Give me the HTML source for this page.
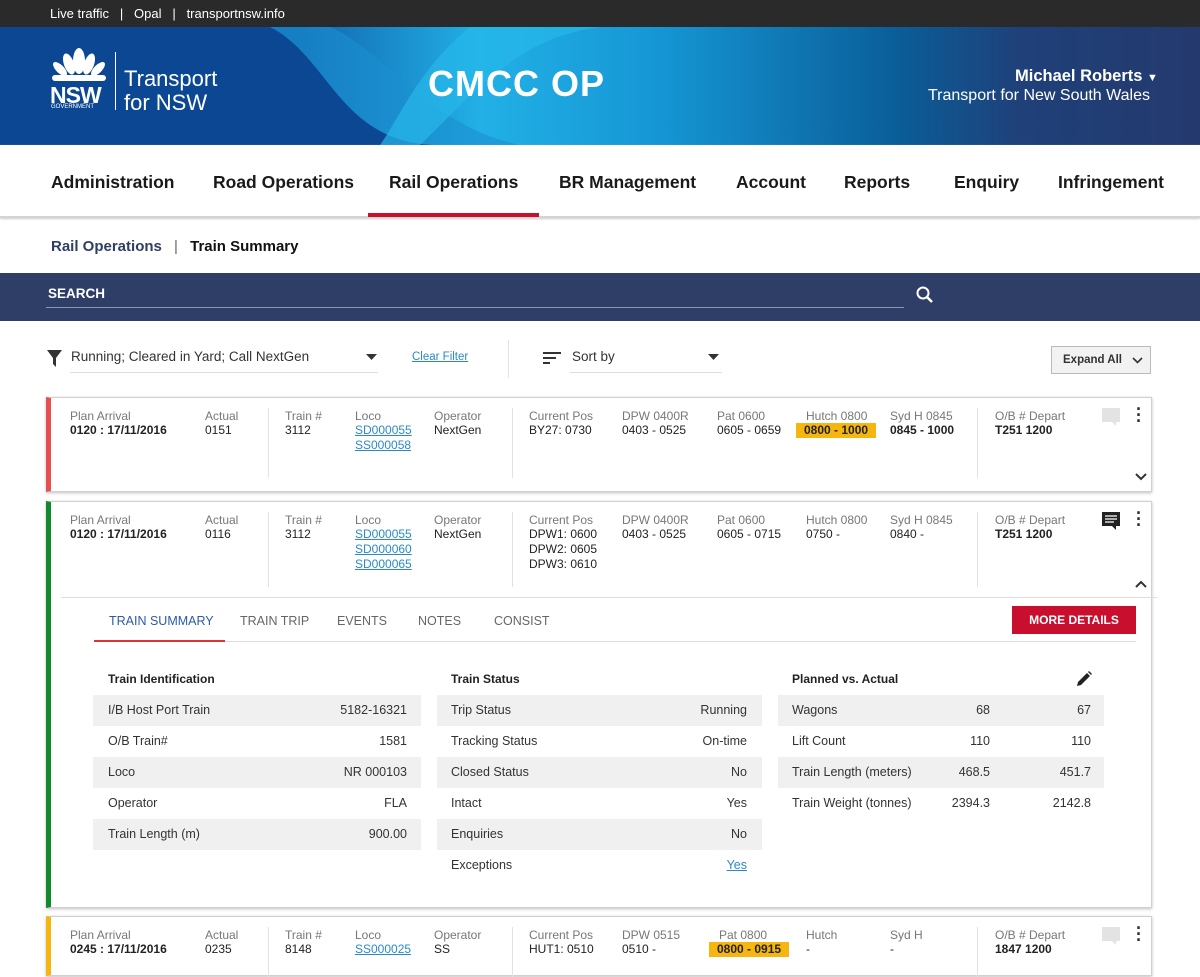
<!DOCTYPE html>
<html><head><meta charset="utf-8">
<style>
*{box-sizing:border-box;margin:0;padding:0}
body{width:1200px;height:960px;overflow:hidden;background:#fff;font-family:"Liberation Sans",sans-serif;color:#222;position:relative}
.a{position:absolute;white-space:nowrap}
.top{left:0;top:0;width:1200px;height:27px;background:#2a2a2a;color:#fff;font-size:13px;line-height:27px;padding-left:50px}
.hdr{left:0;top:27px;width:1200px;height:118px;overflow:hidden;background:linear-gradient(90deg,#0c4a95 0%,#1166b0 25%,#22b0e6 40%,#1596d4 55%,#0a5d98 75%,#1f4079 85%,#243a6e 100%)}
.nav{top:145px;left:0;width:1200px;height:73px;border-bottom:2px solid #d4d4d4;box-shadow:0 1px 2px #ccc}
.nav span{position:absolute;top:27px;font-size:17.5px;font-weight:bold;color:#1a1a1a}
.srch{left:0;top:273px;width:1200px;height:48px;background:#2e3e66}
.lbl{color:#777;font-size:12px}
.val{color:#222;font-size:12px;line-height:15px}
.b{font-weight:bold}
.lnk{color:#2a8ac8;text-decoration:underline}
.card{position:absolute;left:46px;width:1106px;background:#fff;border:1px solid #d0d0d0;box-shadow:0 1px 3px rgba(0,0,0,.25)}
.vd{position:absolute;width:1px;background:#e2e2e2}
.row{position:absolute;height:31px;font-size:12.5px;line-height:31px;color:#333}
.g{background:#f0f0f0}
</style></head><body>
<div class="a top">Live traffic &nbsp;&nbsp;|&nbsp;&nbsp; Opal &nbsp;&nbsp;|&nbsp;&nbsp; transportnsw.info</div>
<div class="a hdr">
<svg width="1200" height="118" style="position:absolute;left:0;top:0">
<path d="M0 0 L270 0 C330 30 340 118 440 118 L0 118 Z" fill="#0b4793"/>
<path d="M270 0 C330 30 340 118 440 118 L520 118 C430 100 380 20 330 0Z" fill="#1a8fd0" opacity=".6"/>
<path d="M420 118 C480 60 520 10 600 0 L470 0 C420 40 400 90 380 118Z" fill="#27b8ea" opacity=".7"/>
</svg>
<svg class="a" style="left:50px;top:20px" width="58" height="36" viewBox="0 0 58 36"><g fill="#fff"><ellipse cx="29" cy="14" rx="6" ry="13"/><ellipse cx="19" cy="17" rx="5" ry="11" transform="rotate(-20 19 17)"/><ellipse cx="39" cy="17" rx="5" ry="11" transform="rotate(20 39 17)"/><ellipse cx="10" cy="22" rx="4" ry="9" transform="rotate(-45 10 22)"/><ellipse cx="48" cy="22" rx="4" ry="9" transform="rotate(45 48 22)"/><rect x="2" y="28" width="54" height="6" rx="3"/></g></svg>
<div class="a" style="left:50px;top:55px;color:#fff;font-weight:bold;font-size:23px;letter-spacing:-1px">NSW</div>
<div class="a" style="left:51px;top:77px;color:#fff;font-size:6px">GOVERNMENT</div>
<div class="a" style="left:115px;top:25px;width:1px;height:58px;background:#fff"></div>
<div class="a" style="left:124px;top:40px;color:#fff;font-size:22px;line-height:24px">Transport<br>for NSW</div>
<div class="a" style="left:428px;top:36px;color:#fff;font-size:36px;font-weight:bold;letter-spacing:1px">CMCC OP</div>
<div class="a" style="left:1015px;top:40px;color:#fff;font-size:16.5px;font-weight:bold">Michael Roberts <span style="font-size:11px">▼</span></div>
<div class="a" style="left:928px;top:60px;color:#fff;font-size:16px">Transport for New South Wales</div>
</div>
<div class="a nav">
<span style="left:51px">Administration</span><span style="left:213px">Road Operations</span><span style="left:389px">Rail Operations</span><span style="left:559px">BR Management</span><span style="left:736px">Account</span><span style="left:844px">Reports</span><span style="left:954px">Enquiry</span><span style="left:1058px">Infringement</span>
<div class="a" style="left:368px;top:68px;width:171px;height:4px;background:#c8102e"></div>
</div>
<div class="a" style="left:51px;top:238px;font-size:15px;color:#2e3e66;font-weight:bold">Rail Operations <span style="color:#666;font-weight:normal;margin:0 8px">|</span> <span style="color:#111">Train Summary</span></div>
<div class="a srch">
<div class="a" style="left:48px;top:13px;color:#fff;font-size:13.5px;font-weight:bold">SEARCH</div>
<div class="a" style="left:46px;top:34px;width:858px;height:1px;background:#8a96b3"></div>
<svg class="a" style="left:915px;top:12px" width="20" height="20" viewBox="0 0 20 20"><circle cx="8" cy="8" r="5.5" stroke="#fff" stroke-width="2" fill="none"/><path d="M12 12 L17 17" stroke="#fff" stroke-width="2.5"/></svg>
</div>
<svg class="a" style="left:47px;top:350px" width="16" height="18" viewBox="0 0 16 18"><path d="M0 0 H15 L9 8 V17 L6 14 V8Z" fill="#333"/></svg>
<div class="a" style="left:71px;top:349px;font-size:13.5px;color:#333">Running; Cleared in Yard; Call NextGen</div>
<svg class="a" style="left:366px;top:354px" width="11" height="6"><path d="M0 0H11L5.5 6Z" fill="#333"/></svg>
<div class="a" style="left:70px;top:372px;width:308px;height:1px;background:#ddd"></div>
<div class="a lnk" style="left:412px;top:351px;font-size:11.5px">Clear Filter</div>
<div class="a" style="left:508px;top:340px;width:1px;height:38px;background:#e3e3e3"></div>
<svg class="a" style="left:543px;top:351px" width="18" height="14"><path d="M0 2H18M0 7H13M0 12H7" stroke="#333" stroke-width="2"/></svg>
<div class="a" style="left:572px;top:349px;font-size:13.5px;color:#333">Sort by</div>
<svg class="a" style="left:708px;top:354px" width="11" height="6"><path d="M0 0H11L5.5 6Z" fill="#333"/></svg>
<div class="a" style="left:570px;top:372px;width:152px;height:1px;background:#ddd"></div>
<div class="a" style="left:1051px;top:346px;width:100px;height:28px;background:#f2f2f2;border:1px solid #bbb;font-size:11.5px;font-weight:bold;color:#333;line-height:26px;padding-left:11px">Expand All</div>
<svg class="a" style="left:1132px;top:357px" width="11" height="7"><path d="M1 1L5.5 5.5L10 1" stroke="#333" stroke-width="1.6" fill="none"/></svg>

<!-- card 1 -->
<div class="card" style="top:397px;height:95px;border-left:5px solid #e8504f">
<div class="vd" style="left:217px;top:10px;height:70px"></div><div class="vd" style="left:461px;top:10px;height:70px"></div><div class="vd" style="left:926px;top:10px;height:70px"></div>
<div class="a" style="left:19px;top:11px"><div class="lbl">Plan Arrival</div><div class="val b">0120 : 17/11/2016</div></div>
<div class="a" style="left:154px;top:11px"><div class="lbl">Actual</div><div class="val">0151</div></div>
<div class="a" style="left:234px;top:11px"><div class="lbl">Train #</div><div class="val">3112</div></div>
<div class="a" style="left:304px;top:11px"><div class="lbl">Loco</div><div class="val lnk">SD000055</div><div class="val lnk">SS000058</div></div>
<div class="a" style="left:383px;top:11px"><div class="lbl">Operator</div><div class="val">NextGen</div></div>
<div class="a" style="left:478px;top:11px"><div class="lbl">Current Pos</div><div class="val">BY27: 0730</div></div>
<div class="a" style="left:571px;top:11px"><div class="lbl">DPW 0400R</div><div class="val">0403 - 0525</div></div>
<div class="a" style="left:666px;top:11px"><div class="lbl">Pat 0600</div><div class="val">0605 - 0659</div></div>
<div class="a" style="left:745px;top:11px"><div class="lbl" style="padding-left:10px">Hutch 0800</div><div class="val b" style="background:#f5b70f;padding:0 8px">0800 - 1000</div></div>
<div class="a" style="left:839px;top:11px"><div class="lbl">Syd H 0845</div><div class="val b">0845 - 1000</div></div>
<div class="a" style="left:944px;top:11px"><div class="lbl">O/B # Depart</div><div class="val b">T251 1200</div></div>
<svg class="a" style="left:1050px;top:9px" width="20" height="20"><path d="M1 1H19V15H15V19L11 15H1Z" fill="#e3e3e3"/></svg>
<div class="a" style="left:1085px;top:8px;font-size:18px;font-weight:bold;line-height:6px;color:#333">·<br>·<br>·</div>
<svg class="a" style="left:1084px;top:75px" width="12" height="8"><path d="M1 1L6 6L11 1" stroke="#333" stroke-width="2" fill="none"/></svg>
</div>

<!-- card 2 -->
<div class="card" style="top:501px;height:407px;border-left:5px solid #108a2a">
<div class="vd" style="left:217px;top:10px;height:75px"></div><div class="vd" style="left:461px;top:10px;height:75px"></div><div class="vd" style="left:926px;top:10px;height:75px"></div>
<div class="a" style="left:19px;top:11px"><div class="lbl">Plan Arrival</div><div class="val b">0120 : 17/11/2016</div></div>
<div class="a" style="left:154px;top:11px"><div class="lbl">Actual</div><div class="val">0116</div></div>
<div class="a" style="left:234px;top:11px"><div class="lbl">Train #</div><div class="val">3112</div></div>
<div class="a" style="left:304px;top:11px"><div class="lbl">Loco</div><div class="val lnk">SD000055</div><div class="val lnk">SD000060</div><div class="val lnk">SD000065</div></div>
<div class="a" style="left:383px;top:11px"><div class="lbl">Operator</div><div class="val">NextGen</div></div>
<div class="a" style="left:478px;top:11px"><div class="lbl">Current Pos</div><div class="val">DPW1: 0600</div><div class="val">DPW2: 0605</div><div class="val">DPW3: 0610</div></div>
<div class="a" style="left:571px;top:11px"><div class="lbl">DPW 0400R</div><div class="val">0403 - 0525</div></div>
<div class="a" style="left:666px;top:11px"><div class="lbl">Pat 0600</div><div class="val">0605 - 0715</div></div>
<div class="a" style="left:755px;top:11px"><div class="lbl">Hutch 0800</div><div class="val">0750 -</div></div>
<div class="a" style="left:839px;top:11px"><div class="lbl">Syd H 0845</div><div class="val">0840 -</div></div>
<div class="a" style="left:944px;top:11px"><div class="lbl">O/B # Depart</div><div class="val b">T251 1200</div></div>
<svg class="a" style="left:1050px;top:9px" width="20" height="20"><path d="M1 1H19V15H15V19L11 15H1Z" fill="#222"/><path d="M4 5H16M4 8H16M4 11H13" stroke="#fff" stroke-width="1.3"/></svg>
<div class="a" style="left:1085px;top:8px;font-size:18px;font-weight:bold;line-height:6px;color:#333">·<br>·<br>·</div>
<svg class="a" style="left:1084px;top:78px" width="12" height="8"><path d="M1 7L6 2L11 7" stroke="#333" stroke-width="2" fill="none"/></svg>
<div class="a" style="left:10px;top:95px;width:1096px;height:1px;background:#ddd"></div>
<!-- tabs -->
<div class="a" style="left:58px;top:112px;font-size:12.5px;color:#2b5aa8">TRAIN SUMMARY</div>
<div class="a" style="left:189px;top:112px;font-size:12.5px;color:#666">TRAIN TRIP</div>
<div class="a" style="left:286px;top:112px;font-size:12.5px;color:#666">EVENTS</div>
<div class="a" style="left:367px;top:112px;font-size:12.5px;color:#666">NOTES</div>
<div class="a" style="left:443px;top:112px;font-size:12.5px;color:#666">CONSIST</div>
<div class="a" style="left:43px;top:139px;width:1042px;height:1px;background:#ddd"></div>
<div class="a" style="left:43px;top:138px;width:131px;height:2px;background:#d33"></div>
<div class="a" style="left:961px;top:104px;width:124px;height:28px;background:#c8102e;color:#fff;font-size:12px;font-weight:bold;text-align:center;line-height:28px">MORE DETAILS</div>
<!-- tables -->
<div class="a b" style="left:57px;top:170px;font-size:12px">Train Identification</div>
<div class="a b" style="left:400px;top:170px;font-size:12px">Train Status</div>
<div class="a b" style="left:741px;top:170px;font-size:12px">Planned vs. Actual</div>
<svg class="a" style="left:1024px;top:168px" width="18" height="18"><path d="M2 16L3 12L12 3L15 6L6 15Z" fill="#222"/><path d="M13 2L14 1L17 4L16 5Z" fill="#222"/></svg>
<div class="row g" style="left:42px;top:193px;width:328px"><span style="margin-left:15px">I/B Host Port Train</span><span style="position:absolute;right:14px">5182-16321</span></div>
<div class="row" style="left:42px;top:224px;width:328px"><span style="margin-left:15px">O/B Train#</span><span style="position:absolute;right:14px">1581</span></div>
<div class="row g" style="left:42px;top:255px;width:328px"><span style="margin-left:15px">Loco</span><span style="position:absolute;right:14px">NR 000103</span></div>
<div class="row" style="left:42px;top:286px;width:328px"><span style="margin-left:15px">Operator</span><span style="position:absolute;right:14px">FLA</span></div>
<div class="row g" style="left:42px;top:317px;width:328px"><span style="margin-left:15px">Train Length (m)</span><span style="position:absolute;right:14px">900.00</span></div>
<div class="row g" style="left:386px;top:193px;width:325px"><span style="margin-left:14px">Trip Status</span><span style="position:absolute;right:15px">Running</span></div>
<div class="row" style="left:386px;top:224px;width:325px"><span style="margin-left:14px">Tracking Status</span><span style="position:absolute;right:15px">On-time</span></div>
<div class="row g" style="left:386px;top:255px;width:325px"><span style="margin-left:14px">Closed Status</span><span style="position:absolute;right:15px">No</span></div>
<div class="row" style="left:386px;top:286px;width:325px"><span style="margin-left:14px">Intact</span><span style="position:absolute;right:15px">Yes</span></div>
<div class="row g" style="left:386px;top:317px;width:325px"><span style="margin-left:14px">Enquiries</span><span style="position:absolute;right:15px">No</span></div>
<div class="row" style="left:386px;top:348px;width:325px"><span style="margin-left:14px">Exceptions</span><span class="lnk" style="position:absolute;right:15px">Yes</span></div>
<div class="row g" style="left:727px;top:193px;width:326px"><span style="margin-left:14px">Wagons</span><span style="position:absolute;right:114px">68</span><span style="position:absolute;right:13px">67</span></div>
<div class="row" style="left:727px;top:224px;width:326px"><span style="margin-left:14px">Lift Count</span><span style="position:absolute;right:114px">110</span><span style="position:absolute;right:13px">110</span></div>
<div class="row g" style="left:727px;top:255px;width:326px"><span style="margin-left:14px">Train Length (meters)</span><span style="position:absolute;right:114px">468.5</span><span style="position:absolute;right:13px">451.7</span></div>
<div class="row" style="left:727px;top:286px;width:326px"><span style="margin-left:14px">Train Weight (tonnes)</span><span style="position:absolute;right:114px">2394.3</span><span style="position:absolute;right:13px">2142.8</span></div>
</div>

<!-- card 3 -->
<div class="card" style="top:916px;height:60px;border-left:5px solid #f5b70f">
<div class="vd" style="left:217px;top:10px;height:50px"></div><div class="vd" style="left:461px;top:10px;height:50px"></div><div class="vd" style="left:926px;top:10px;height:50px"></div>
<div class="a" style="left:19px;top:11px"><div class="lbl">Plan Arrival</div><div class="val b">0245 : 17/11/2016</div></div>
<div class="a" style="left:154px;top:11px"><div class="lbl">Actual</div><div class="val">0235</div></div>
<div class="a" style="left:234px;top:11px"><div class="lbl">Train #</div><div class="val">8148</div></div>
<div class="a" style="left:304px;top:11px"><div class="lbl">Loco</div><div class="val lnk">SS000025</div></div>
<div class="a" style="left:383px;top:11px"><div class="lbl">Operator</div><div class="val">SS</div></div>
<div class="a" style="left:478px;top:11px"><div class="lbl">Current Pos</div><div class="val">HUT1: 0510</div></div>
<div class="a" style="left:571px;top:11px"><div class="lbl">DPW 0515</div><div class="val">0510 -</div></div>
<div class="a" style="left:658px;top:11px"><div class="lbl" style="padding-left:10px">Pat 0800</div><div class="val b" style="background:#f5b70f;padding:0 8px">0800 - 0915</div></div>
<div class="a" style="left:755px;top:11px"><div class="lbl">Hutch</div><div class="val">-</div></div>
<div class="a" style="left:839px;top:11px"><div class="lbl">Syd H</div><div class="val">-</div></div>
<div class="a" style="left:944px;top:11px"><div class="lbl">O/B # Depart</div><div class="val b">1847 1200</div></div>
<svg class="a" style="left:1050px;top:9px" width="20" height="20"><path d="M1 1H19V15H15V19L11 15H1Z" fill="#e3e3e3"/></svg>
<div class="a" style="left:1085px;top:8px;font-size:18px;font-weight:bold;line-height:6px;color:#333">·<br>·<br>·</div>
</div>
</body></html>
